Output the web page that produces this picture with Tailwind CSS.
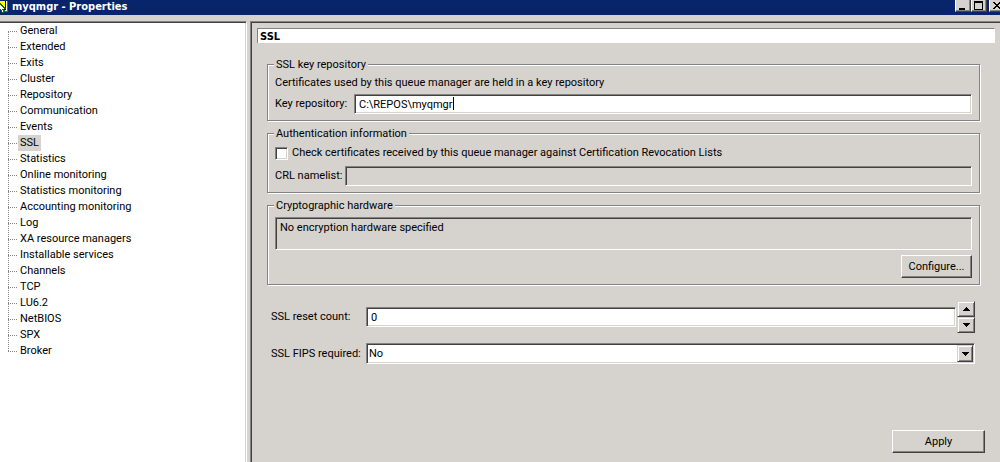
<!DOCTYPE html>
<html lang="en">
<head>
<meta charset="utf-8">
<meta name="viewport" content="width=device-width, initial-scale=1">
<title>myqmgr - Properties</title>
<script src="https://cdn.jsdelivr.net/npm/@tailwindcss/browser@4"></script>
</head>
<body class="flex min-h-screen flex-col bg-[#d6d3ce] font-[Roboto,sans-serif] text-[11px] leading-4 text-black">

<!-- Title bar -->
<header class="flex h-[15px] items-start justify-between overflow-hidden bg-[#08246b]">
  <div class="flex items-center">
    <svg class="h-3 w-3" viewBox="0 0 12 12" shape-rendering="crispEdges" aria-hidden="true">
      <path fill="#ffff00" d="M0 0h5v8H0z"/>
      <path fill="#000" d="M5 0h1v9H4v-1h1z"/>
      <path fill="#fff" d="M6 0h1v10H4V9h2z"/>
      <path fill="#9c309c" d="M7 0h1v11H4v-1h3z"/>
      <path fill="#087508" d="M0 2h1v1h1v1h1v1h1v1h1v1h1v1H4v1h1v2H4v1H2v-1H1v-2H0z"/>
      <path fill="#fff" d="M0 4h1v1h1v1h1v1h1v1H2v1h1v2H2V9H1V8H0z"/>
    </svg>
    <h1 class="font-['DejaVu_Sans_Condensed','DejaVu_Sans',sans-serif] font-bold leading-[14px] text-white">myqmgr - Properties</h1>
  </div>
  <div class="-mr-[5px] flex">
    <button type="button" aria-label="Minimize" class="h-3 w-4 border-r border-b border-l border-r-[#424142] border-b-[#424142] border-l-white bg-[#d6d3ce] shadow-[inset_-1px_-1px_0_#848284]">
      <svg class="h-[11px] w-[14px]" viewBox="0 0 14 11" shape-rendering="crispEdges"><path d="M3 8h6v2H3z"/></svg>
    </button>
    <button type="button" aria-label="Maximize" class="h-3 w-4 border-r border-b border-l border-r-[#424142] border-b-[#424142] border-l-white bg-[#d6d3ce] shadow-[inset_-1px_-1px_0_#848284]">
      <svg class="h-[11px] w-[14px]" viewBox="0 0 14 11" shape-rendering="crispEdges"><path fill-rule="evenodd" d="M2 1h9v9H2zM3 3v6h7V3z"/></svg>
    </button>
    <button type="button" aria-label="Close" class="ml-0.5 h-3 w-4 border-r border-b border-l border-r-[#424142] border-b-[#424142] border-l-white bg-[#d6d3ce] shadow-[inset_-1px_-1px_0_#848284]">
      <svg class="h-[11px] w-[14px]" viewBox="0 0 14 11" shape-rendering="crispEdges"><path d="M3 2h2v1h1v1h2V3h1V2h2v1h-1v1H9v1H8v1h1v1h1v1h1v1H9V8H8V7H6v1H5v1H3V8h1V7h1V6h1V5H5V4H4V3H3z"/></svg>
    </button>
  </div>
</header>

<div class="flex flex-1 pt-1.5">
  <!-- Category tree -->
  <nav aria-label="Property pages" class="w-[247px] shrink-0 border-t border-r border-t-[#848284] border-r-white bg-white pl-2 shadow-[inset_0_1px_0_#424142,inset_-1px_0_0_#d6d3ce]">
    <div class="relative pt-px">
      <div class="absolute top-2.5 bottom-2 left-0 border-l border-dotted border-[#848284]"></div>
      <ul>
        <li class="flex h-4 items-center gap-px"><span class="w-[9px] border-t border-dotted border-[#848284]"></span><a href="#general" class="px-0.5">General</a></li>
        <li class="flex h-4 items-center gap-px"><span class="w-[9px] border-t border-dotted border-[#848284]"></span><a href="#extended" class="px-0.5">Extended</a></li>
        <li class="flex h-4 items-center gap-px"><span class="w-[9px] border-t border-dotted border-[#848284]"></span><a href="#exits" class="px-0.5">Exits</a></li>
        <li class="flex h-4 items-center gap-px"><span class="w-[9px] border-t border-dotted border-[#848284]"></span><a href="#cluster" class="px-0.5">Cluster</a></li>
        <li class="flex h-4 items-center gap-px"><span class="w-[9px] border-t border-dotted border-[#848284]"></span><a href="#repository" class="px-0.5">Repository</a></li>
        <li class="flex h-4 items-center gap-px"><span class="w-[9px] border-t border-dotted border-[#848284]"></span><a href="#communication" class="px-0.5">Communication</a></li>
        <li class="flex h-4 items-center gap-px"><span class="w-[9px] border-t border-dotted border-[#848284]"></span><a href="#events" class="px-0.5">Events</a></li>
        <li class="flex h-4 items-center gap-px"><span class="w-[9px] border-t border-dotted border-[#848284]"></span><a href="#ssl" aria-current="page" class="bg-[#d6d3ce] px-0.5">SSL</a></li>
        <li class="flex h-4 items-center gap-px"><span class="w-[9px] border-t border-dotted border-[#848284]"></span><a href="#statistics" class="px-0.5">Statistics</a></li>
        <li class="flex h-4 items-center gap-px"><span class="w-[9px] border-t border-dotted border-[#848284]"></span><a href="#online-monitoring" class="px-0.5">Online monitoring</a></li>
        <li class="flex h-4 items-center gap-px"><span class="w-[9px] border-t border-dotted border-[#848284]"></span><a href="#statistics-monitoring" class="px-0.5">Statistics monitoring</a></li>
        <li class="flex h-4 items-center gap-px"><span class="w-[9px] border-t border-dotted border-[#848284]"></span><a href="#accounting-monitoring" class="px-0.5">Accounting monitoring</a></li>
        <li class="flex h-4 items-center gap-px"><span class="w-[9px] border-t border-dotted border-[#848284]"></span><a href="#log" class="px-0.5">Log</a></li>
        <li class="flex h-4 items-center gap-px"><span class="w-[9px] border-t border-dotted border-[#848284]"></span><a href="#xa" class="px-0.5">XA resource managers</a></li>
        <li class="flex h-4 items-center gap-px"><span class="w-[9px] border-t border-dotted border-[#848284]"></span><a href="#services" class="px-0.5">Installable services</a></li>
        <li class="flex h-4 items-center gap-px"><span class="w-[9px] border-t border-dotted border-[#848284]"></span><a href="#channels" class="px-0.5">Channels</a></li>
        <li class="flex h-4 items-center gap-px"><span class="w-[9px] border-t border-dotted border-[#848284]"></span><a href="#tcp" class="px-0.5">TCP</a></li>
        <li class="flex h-4 items-center gap-px"><span class="w-[9px] border-t border-dotted border-[#848284]"></span><a href="#lu62" class="px-0.5">LU6.2</a></li>
        <li class="flex h-4 items-center gap-px"><span class="w-[9px] border-t border-dotted border-[#848284]"></span><a href="#netbios" class="px-0.5">NetBIOS</a></li>
        <li class="flex h-4 items-center gap-px"><span class="w-[9px] border-t border-dotted border-[#848284]"></span><a href="#spx" class="px-0.5">SPX</a></li>
        <li class="flex h-4 items-center gap-px"><span class="w-[9px] border-t border-dotted border-[#848284]"></span><a href="#broker" class="px-0.5">Broker</a></li>
      </ul>
    </div>
  </nav>

  <!-- SSL page -->
  <main class="ml-[3px] flex min-w-0 flex-1 flex-col border-t border-l border-[#848284] pt-1.5 pl-1.5 shadow-[inset_1px_1px_0_#424142]">
    <h2 class="mr-[5px] h-[15px] border-t border-r border-l border-t-[#848284] border-r-white border-l-[#848284] bg-white pl-0.5 font-['DejaVu_Sans_Condensed','DejaVu_Sans',sans-serif] font-bold leading-[15px]">SSL</h2>

    <form class="flex flex-1 flex-col pt-3.5 pl-2.5">
      <div class="mr-5 flex flex-col gap-[5px]">
        <fieldset class="min-w-0 border border-[#848284] px-[7px] pb-1.5 shadow-[inset_1px_1px_0_#fff,1px_1px_0_#fff]">
          <legend class="-ml-px bg-[#d6d3ce] px-0.5 leading-[15px]">SSL key repository</legend>
          <p class="pt-[3px]">Certificates used by this queue manager are held in a key repository</p>
          <div class="mt-[3px] flex items-center gap-1">
            <label for="keyrepo" class="w-[75px] shrink-0 whitespace-nowrap">Key repository:</label>
            <div class="relative flex-1">
              <input id="keyrepo" type="text" value="C:\REPOS\myqmgr" class="block h-5 w-full border border-t-[#848284] border-r-white border-b-white border-l-[#848284] bg-white px-1 shadow-[inset_1px_1px_0_#424142,inset_-1px_-1px_0_#d6d3ce] outline-none">
              <span class="absolute top-[3px] left-[99px] h-[13px] w-px bg-black"></span>
            </div>
          </div>
        </fieldset>

        <fieldset class="min-w-0 border border-[#848284] px-[7px] pb-1.5 shadow-[inset_1px_1px_0_#fff,1px_1px_0_#fff]">
          <legend class="-ml-px bg-[#d6d3ce] px-0.5 leading-[15px]">Authentication information</legend>
          <div class="flex items-center gap-1 pt-1">
            <input id="crlcheck" type="checkbox" class="h-[13px] w-[13px] appearance-none border border-t-[#848284] border-r-white border-b-white border-l-[#848284] bg-white shadow-[inset_1px_1px_0_#424142,inset_-1px_-1px_0_#d6d3ce]">
            <label for="crlcheck">Check certificates received by this queue manager against Certification Revocation Lists</label>
          </div>
          <div class="mt-[5px] flex items-center gap-1">
            <label for="crl" class="w-[66px] shrink-0 whitespace-nowrap">CRL namelist:</label>
            <input id="crl" type="text" disabled class="block h-5 min-w-0 flex-1 border border-t-[#848284] border-r-white border-b-white border-l-[#848284] bg-[#d6d3ce] px-1 shadow-[inset_1px_1px_0_#424142]">
          </div>
        </fieldset>

        <fieldset class="min-w-0 border border-[#848284] px-[7px] pb-1.5 shadow-[inset_1px_1px_0_#fff,1px_1px_0_#fff]">
          <legend class="-ml-px bg-[#d6d3ce] px-0.5 leading-[15px]">Cryptographic hardware</legend>
          <div class="pt-1">
            <textarea readonly aria-label="Cryptographic hardware" class="block h-[33px] w-full resize-none overflow-hidden border border-t-[#848284] border-r-white border-b-white border-l-[#848284] px-1 pt-0.5 shadow-[inset_1px_1px_0_#424142] outline-none">No encryption hardware specified</textarea>
          </div>
          <div class="mt-[5px] flex justify-end">
            <button type="button" class="h-[23px] w-[71px] border border-t-white border-r-[#424142] border-b-[#424142] border-l-white shadow-[inset_-1px_-1px_0_#848284]">Configure...</button>
          </div>
        </fieldset>
      </div>

      <div class="mt-4 mr-[25px] grid grid-cols-[95px_1fr] items-center gap-y-2.5 pl-1">
        <label for="reset" class="whitespace-nowrap">SSL reset count:</label>
        <div class="flex items-center gap-px">
          <input id="reset" type="text" inputmode="numeric" value="0" class="block h-5 min-w-0 flex-1 border border-t-[#848284] border-r-white border-b-white border-l-[#848284] bg-white px-1 shadow-[inset_1px_1px_0_#424142,inset_-1px_-1px_0_#d6d3ce] outline-none">
          <div class="flex w-[18px] flex-col">
            <button type="button" aria-label="Increase" class="flex h-4 items-center justify-center border border-t-[#d6d3ce] border-r-[#424142] border-b-[#424142] border-l-[#d6d3ce] shadow-[inset_1px_1px_0_#fff,inset_-1px_-1px_0_#848284]">
              <svg class="h-1 w-[7px]" viewBox="0 0 7 4" shape-rendering="crispEdges"><path d="M3 0h1v1h1v1h1v1h1v1H0V3h1V2h1V1h1z"/></svg>
            </button>
            <button type="button" aria-label="Decrease" class="flex h-4 items-center justify-center border border-t-[#d6d3ce] border-r-[#424142] border-b-[#424142] border-l-[#d6d3ce] shadow-[inset_1px_1px_0_#fff,inset_-1px_-1px_0_#848284]">
              <svg class="h-1 w-[7px]" viewBox="0 0 7 4" shape-rendering="crispEdges"><path d="M0 0h7v1H6v1H5v1H4v1H3V3H2V2H1V1H0z"/></svg>
            </button>
          </div>
        </div>

        <label for="fips" class="whitespace-nowrap">SSL FIPS required:</label>
        <div class="relative">
          <select id="fips" class="block h-[21px] w-full appearance-none border border-t-[#848284] border-r-white border-b-white border-l-[#848284] bg-white px-0.5 shadow-[inset_1px_1px_0_#424142,inset_-1px_-1px_0_#d6d3ce] outline-none">
            <option>No</option>
            <option>Yes</option>
          </select>
          <span class="pointer-events-none absolute inset-y-0.5 right-0.5 flex w-4 items-center justify-center border border-t-[#d6d3ce] border-r-[#424142] border-b-[#424142] border-l-[#d6d3ce] bg-[#d6d3ce] shadow-[inset_1px_1px_0_#fff,inset_-1px_-1px_0_#848284]">
            <svg class="h-1 w-[7px]" viewBox="0 0 7 4" shape-rendering="crispEdges" aria-hidden="true"><path d="M0 0h7v1H6v1H5v1H4v1H3V3H2V2H1V1H0z"/></svg>
          </span>
        </div>
      </div>

      <div class="mt-auto mr-[15px] flex justify-end pb-[9px]">
        <button type="button" class="h-[23px] w-[93px] border border-t-white border-r-[#424142] border-b-[#424142] border-l-white shadow-[inset_-1px_-1px_0_#848284]">Apply</button>
      </div>
    </form>
  </main>
</div>
</body>
</html>
